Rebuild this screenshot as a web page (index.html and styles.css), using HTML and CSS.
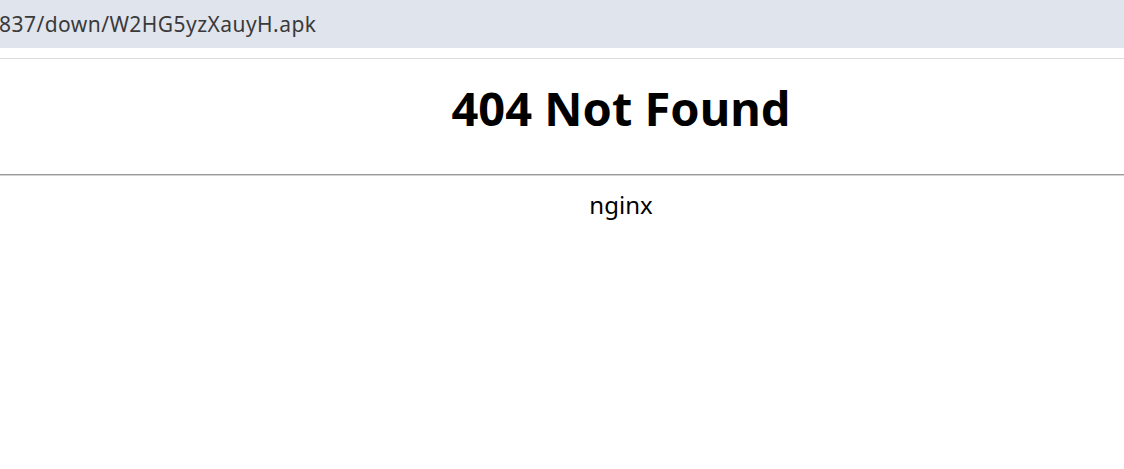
FILE: index.html
```html
<!DOCTYPE html>
<html lang="en">
<head>
<meta charset="utf-8">
<title>404 Not Found</title>
<link rel="stylesheet" href="styles.css">
</head>
<body>
<div class="topbar"><span class="url">837/down/W2HG5yzXauyH.apk</span></div>
<div class="toolbar-gap"></div>
<main class="page">
  <h1 class="title">404 Not Found</h1>
  <hr class="rule">
  <div class="server">nginx</div>
</main>
</body>
</html>
```
FILE: styles.css
```css
html, body {
  margin: 0;
  padding: 0;
  background: #ffffff;
}
body {
  font-family: "Noto Sans", "Open Sans", sans-serif;
  overflow: hidden;
}
.topbar {
  height: 48px;
  background: #e0e4ed;
  display: flex;
  align-items: center;
}
.url {
  font-size: 21px;
  letter-spacing: 0.45px;
  color: #3a3a3a;
  margin-left: -1px;
  white-space: nowrap;
}
.toolbar-gap {
  height: 10px;
  border-bottom: 1px solid #dedede;
}
.page {
  color: #000;
}
.title {
  margin: 21px 0 0 0;
  padding-left: 118px;
  text-align: center;
  font-size: 47px;
  font-weight: 700;
  line-height: 1.2;
}
.rule {
  margin: 38px 0 0 0;
  border: 0;
  border-top: 1px solid #9a9a9a;
  border-bottom: 1px solid #d4d4d4;
  height: 0;
}
.server {
  margin-top: 15px;
  padding-left: 118px;
  text-align: center;
  font-size: 24px;
  line-height: 1.2;
}
```
